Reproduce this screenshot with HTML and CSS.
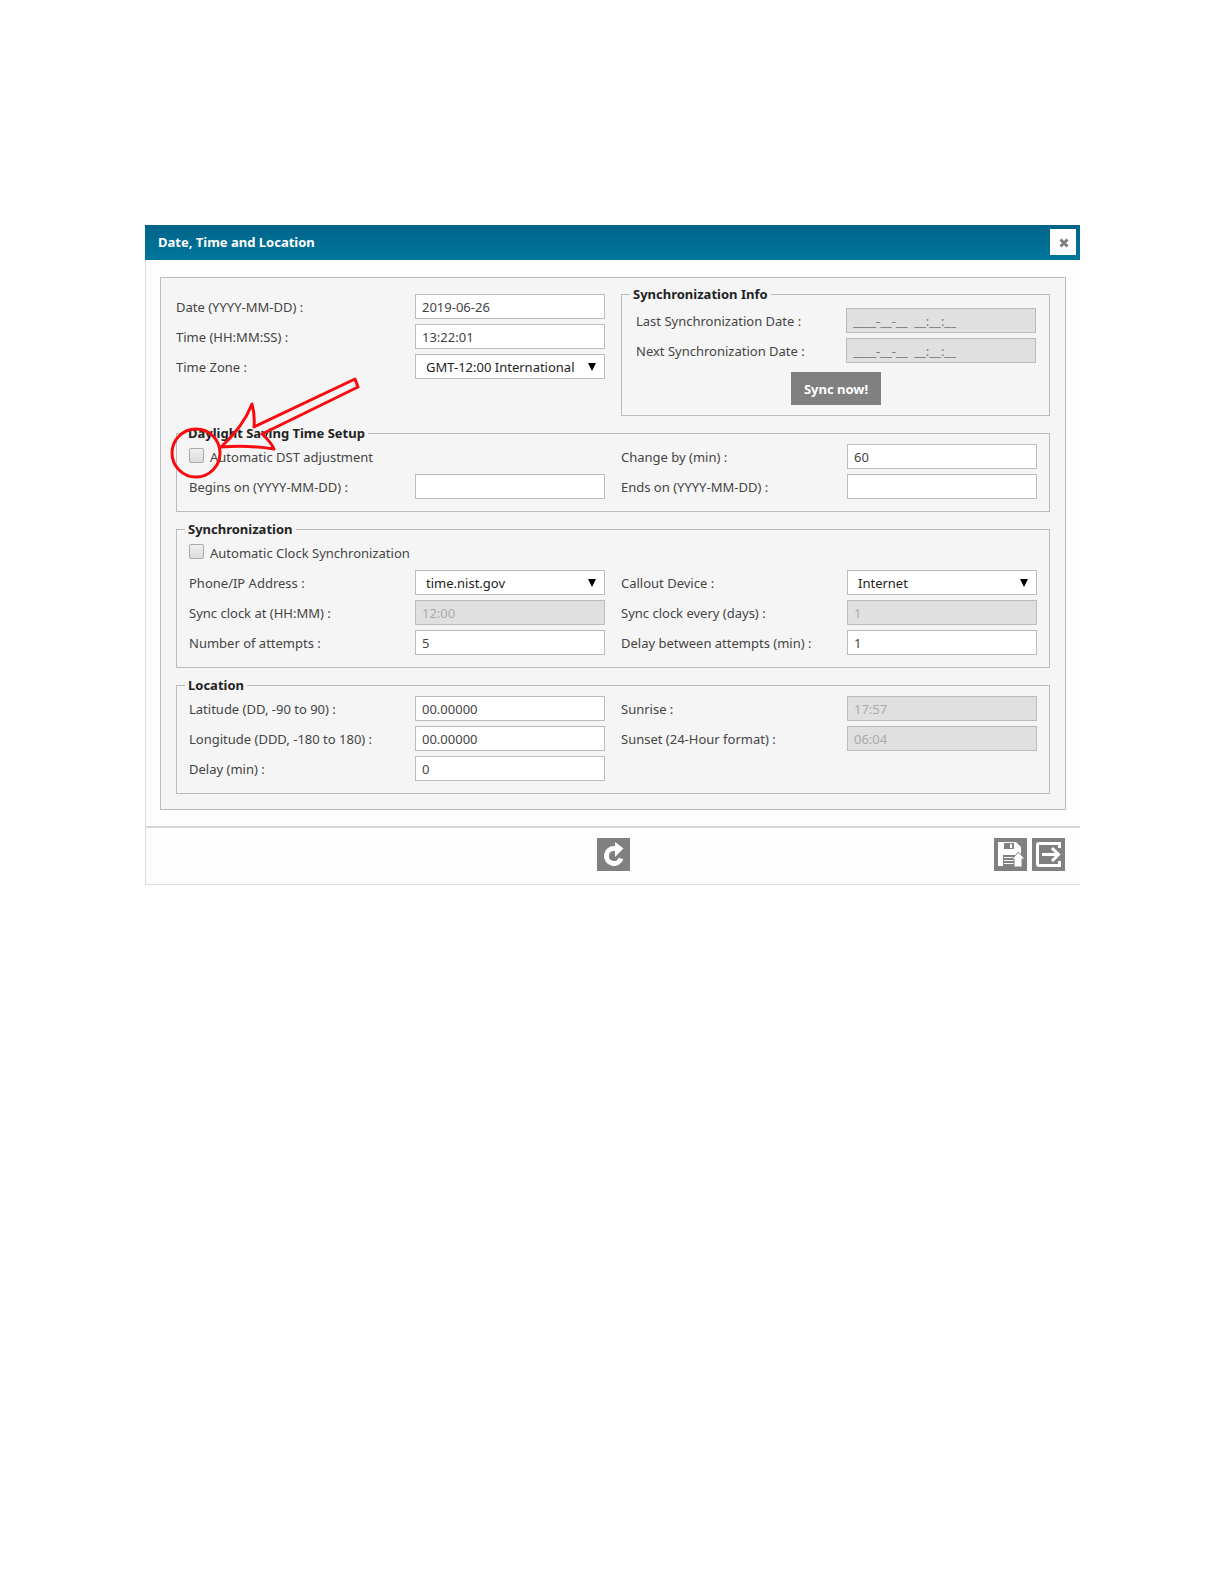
FILE: index.html
```
<!DOCTYPE html>
<html lang="en">
<head>
    <meta charset="UTF-8">
    <meta name="viewport" content="width=device-width, initial-scale=1.0">
    <title>Date, Time and Location</title>
    <link rel="stylesheet" href="styles.css">
</head>
<body>
    <form class="dialog">
        <header class="dialog-header">
            <h1>Date, Time and Location</h1>
            <button type="button" class="close" aria-label="Close">
                <svg width="10" height="10" viewBox="0 0 10 10"><path d="M1.5 1.5L8.5 8.5M8.5 1.5L1.5 8.5" stroke="#808080" stroke-width="3"/></svg>
            </button>
        </header>

        <div class="dialog-body">
            <div class="panel">
                <div class="top">
                    <div class="clock">
                        <div class="field">
                            <label for="date">Date (YYYY-MM-DD) :</label>
                            <input type="text" id="date" value="2019-06-26">
                        </div>
                        <div class="field">
                            <label for="time">Time (HH:MM:SS) :</label>
                            <input type="text" id="time" value="13:22:01">
                        </div>
                        <div class="field">
                            <label for="zone">Time Zone :</label>
                            <span class="select"><select id="zone"><option>GMT-12:00 International</option></select></span>
                        </div>
                    </div>
                    <fieldset class="info">
                        <legend>Synchronization Info</legend>
                        <div class="field">
                            <label for="lastSync">Last Synchronization Date :</label>
                            <input type="text" id="lastSync" class="blank" value="____-__-__  __:__:__" disabled>
                        </div>
                        <div class="field">
                            <label for="nextSync">Next Synchronization Date :</label>
                            <input type="text" id="nextSync" class="blank" value="____-__-__  __:__:__" disabled>
                        </div>
                        <button type="button" class="sync-now">Sync now!</button>
                    </fieldset>
                </div>

                <fieldset>
                    <legend>Daylight Saving Time Setup</legend>
                    <div class="fields">
                        <div class="check">
                            <input type="checkbox" id="autoDst">
                            <label for="autoDst">Automatic DST adjustment</label>
                            <!-- callout: circle round the tick box and an arrow to it -->
                            <svg class="callout" width="196" height="110" viewBox="0 0 196 110" fill="none" stroke="#fa0a0e" stroke-width="3" stroke-linejoin="round">
                                <circle cx="29" cy="81" r="24"/>
                                <path d="M188 7L191 15L95 62Q104 70 107 77Q82 73 54 75Q76 55 85 32Q88 43 87 55Z"/>
                            </svg>
                        </div>
                        <div class="field">
                            <label for="changeBy">Change by (min) :</label>
                            <input type="text" id="changeBy" value="60">
                        </div>
                        <div class="field">
                            <label for="begins">Begins on (YYYY-MM-DD) :</label>
                            <input type="text" id="begins">
                        </div>
                        <div class="field">
                            <label for="ends">Ends on (YYYY-MM-DD) :</label>
                            <input type="text" id="ends">
                        </div>
                    </div>
                </fieldset>

                <fieldset>
                    <legend>Synchronization</legend>
                    <div class="fields">
                        <div class="check wide">
                            <input type="checkbox" id="autoSync">
                            <label for="autoSync">Automatic Clock Synchronization</label>
                        </div>
                        <div class="field">
                            <label for="address">Phone/IP Address :</label>
                            <span class="select"><select id="address"><option>time.nist.gov</option></select></span>
                        </div>
                        <div class="field">
                            <label for="device">Callout Device :</label>
                            <span class="select"><select id="device"><option>Internet</option></select></span>
                        </div>
                        <div class="field">
                            <label for="syncAt">Sync clock at (HH:MM) :</label>
                            <input type="text" id="syncAt" value="12:00" disabled>
                        </div>
                        <div class="field">
                            <label for="syncEvery">Sync clock every (days) :</label>
                            <input type="text" id="syncEvery" value="1" disabled>
                        </div>
                        <div class="field">
                            <label for="attempts">Number of attempts :</label>
                            <input type="text" id="attempts" value="5">
                        </div>
                        <div class="field">
                            <label for="attemptDelay">Delay between attempts (min) :</label>
                            <input type="text" id="attemptDelay" value="1">
                        </div>
                    </div>
                </fieldset>

                <fieldset>
                    <legend>Location</legend>
                    <div class="fields">
                        <div class="field">
                            <label for="latitude">Latitude (DD, -90 to 90) :</label>
                            <input type="text" id="latitude" value="00.00000">
                        </div>
                        <div class="field">
                            <label for="sunrise">Sunrise :</label>
                            <input type="text" id="sunrise" value="17:57" disabled>
                        </div>
                        <div class="field">
                            <label for="longitude">Longitude (DDD, -180 to 180) :</label>
                            <input type="text" id="longitude" value="00.00000">
                        </div>
                        <div class="field">
                            <label for="sunset">Sunset (24-Hour format) :</label>
                            <input type="text" id="sunset" value="06:04" disabled>
                        </div>
                        <div class="field">
                            <label for="delay">Delay (min) :</label>
                            <input type="text" id="delay" value="0">
                        </div>
                    </div>
                </fieldset>
            </div>
        </div>

        <footer class="dialog-footer">
            <button type="button" class="icon refresh" aria-label="Refresh">
                <svg width="33" height="33" viewBox="0 0 33 33">
                    <path d="M20 10.5H17A7.5 7.5 0 1 0 24 20.5" fill="none" stroke="#fff" stroke-width="5"/>
                    <path d="M18 4L26.5 10.5L18 19Z" fill="#fff"/>
                </svg>
            </button>
            <div class="actions">
                <button type="button" class="icon" aria-label="Save">
                    <svg width="33" height="33" viewBox="0 0 33 33">
                        <path d="M4 4H22L27 9V28H4Z" fill="#fff"/>
                        <path d="M10 5H20V11H10ZM9 17H21V28H9Z" fill="#808080"/>
                        <path d="M16 6H18V10H16Z" fill="#fff"/>
                        <path d="M10 19.5H20M10 22.5H20M10 25.5H20" stroke="#fff"/>
                        <path d="M24.5 14L31 21H28V29H20V21H18Z" fill="#fff" stroke="#808080"/>
                    </svg>
                </button>
                <button type="button" class="icon" aria-label="Exit">
                    <svg width="33" height="33" viewBox="0 0 33 33" fill="none" stroke="#fff" stroke-width="3">
                        <path d="M27.5 10V5.5H7Q5.5 5.5 5.5 7V26Q5.5 27.5 7 27.5H27.5V23"/>
                        <path d="M10 16.5H26M20 10L26.5 16.5L20 23"/>
                    </svg>
                </button>
            </div>
        </footer>
    </form>
</body>
</html>
```
FILE: styles.css
```
* {
    box-sizing: border-box;
}
body {
    margin: 0;
    padding: 225px 144px 40px 145px;
    background: #fff;
    color: #444;
    font: 13px/18px "Noto Sans", sans-serif;
}
input, select, button {
    font: inherit;
    color: inherit;
}
.dialog {
    background: #fdfdfd;
    border: 1px solid #ddd;
    border-width: 0 0 1px 1px;
}
.dialog-header {
    display: flex;
    align-items: center;
    justify-content: space-between;
    height: 35px;
    margin-left: -1px;
    padding: 0 4px 2px 13px;
    background: linear-gradient(#00648a, #00769b);
    color: #fff;
}
.dialog-header h1 {
    margin: 0;
    font-size: 13px;
}
.close {
    display: flex;
    align-items: center;
    justify-content: center;
    width: 26px;
    height: 26px;
    padding: 2px 0 0 2px;
    border: 0;
    background: #fff;
}
.dialog-body {
    padding: 17px 14px 16px;
}
.panel {
    padding: 7px 15px 15px;
    border: 1px solid #bbb;
    background: #f5f5f5;
}
.top, .fields {
    display: grid;
    grid-template-columns: 1fr 1fr;
    column-gap: 16px;
}
.fields {
    row-gap: 5px;
}
.clock {
    padding-top: 9px;
}
fieldset {
    min-width: 0;
    margin: 8px 0 0;
    padding: 2px 12px 12px;
    border: 1px solid #bbb;
}
legend {
    margin-left: -4px;
    padding: 0 3px;
    color: #222;
    font-weight: bold;
}
.info {
    margin-top: 0;
    padding: 5px 13px 10px 14px;
}
.info legend {
    margin-left: -6px;
}
.field {
    display: grid;
    grid-template-columns: 1fr 190px;
    align-items: center;
    height: 25px;
}
.clock .field, .info .field {
    margin-bottom: 5px;
}
.field input, .field select {
    width: 100%;
    height: 25px;
    padding: 0 6px;
    border: 1px solid #bbb;
    border-radius: 0;
    background: #fff;
}
.field input:disabled {
    background: #e0e0e0;
    color: #aaa;
}
.field .blank:disabled {
    color: #777;
    white-space: pre;
}
.select {
    position: relative;
}
.field select {
    appearance: none;
    padding-left: 10px;
    color: #222;
}
.select::after {
    content: "";
    position: absolute;
    top: 9px;
    right: 9px;
    border: 4px solid transparent;
    border-top: 8px solid #000;
    border-bottom: 0;
    pointer-events: none;
}
.check {
    position: relative;
    display: flex;
    align-items: center;
    gap: 6px;
    height: 25px;
}
.wide {
    grid-column: 1 / -1;
}
.check input {
    appearance: none;
    width: 15px;
    height: 15px;
    margin: 0 0 3px;
    border: 1px solid #aaa;
    border-radius: 2px;
    background: linear-gradient(#eee, #ddd);
}
.callout {
    position: absolute;
    top: -72px;
    left: -22px;
    pointer-events: none;
}
.sync-now {
    display: block;
    height: 33px;
    margin: 9px auto 0;
    padding: 0 13px;
    border: 0;
    background: #808080;
    color: #fff;
    font-weight: bold;
}
.dialog-footer {
    display: grid;
    grid-template-columns: 1fr auto 1fr;
    padding: 10px 15px 13px;
    border-top: 2px solid #d5d5d5;
}
.refresh {
    grid-column: 2;
}
.actions {
    display: flex;
    justify-content: flex-end;
    gap: 5px;
}
.icon {
    width: 33px;
    height: 33px;
    padding: 0;
    border: 0;
    background: #808080;
}
.icon svg {
    display: block;
}
```
